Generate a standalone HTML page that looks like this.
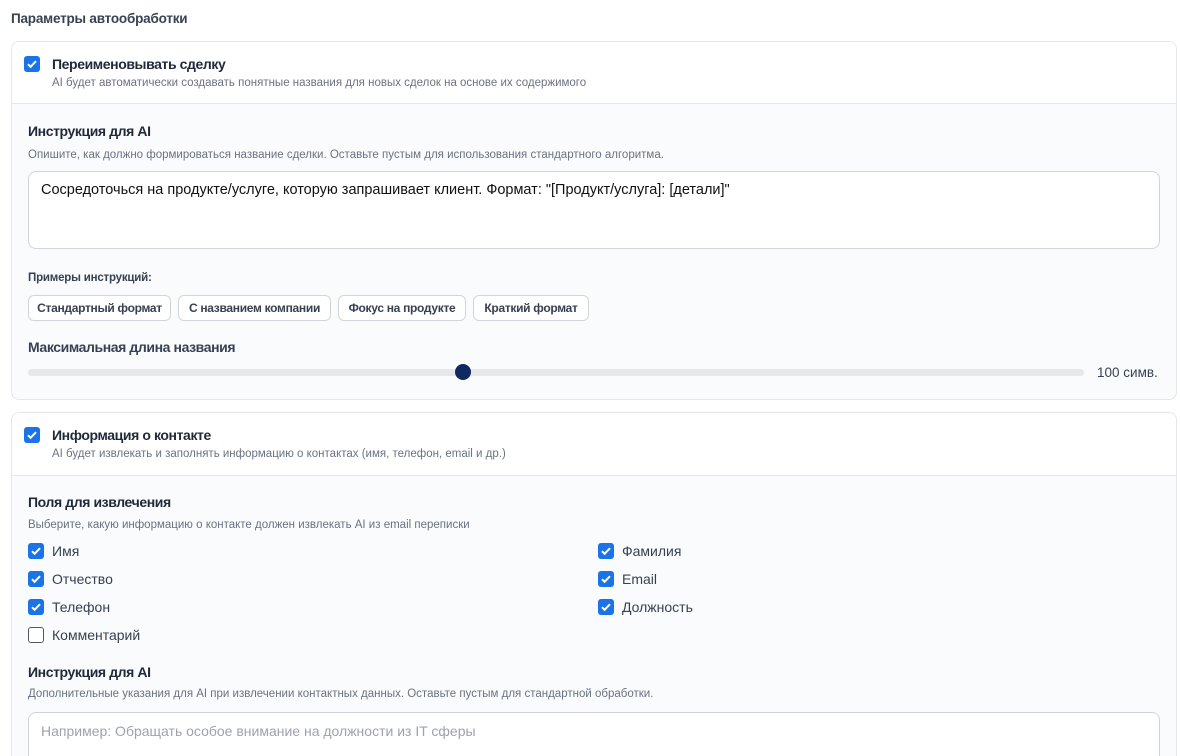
<!DOCTYPE html>
<html><head><meta charset="utf-8"><style>
*{box-sizing:border-box;margin:0;padding:0}
html,body{width:1180px;height:756px;overflow:hidden}
body{background:#fff;font-family:"Liberation Sans",sans-serif;color:#1f2937;position:relative}
.a{position:absolute;white-space:nowrap}
.card{position:absolute;left:11px;width:1166px;border:1px solid #e5e7eb;border-radius:8px;background:#fafbfd;overflow:hidden}
.hd{background:#fff;border-bottom:1px solid #e5e7eb;height:62px;position:relative}
.cb{position:absolute;width:16px;height:16px;border-radius:3px;background:#1a73e8}
.cb svg{position:absolute;left:2px;top:2px}
.cb.off{background:#fff;border:1.5px solid #555}
.t{font-size:14px;font-weight:bold;letter-spacing:-0.4px;color:#1f2937}
.d{font-size:11.5px;color:#6b7280;letter-spacing:0px}
.l{font-size:14px;color:#374151;letter-spacing:0px}
.chip{position:absolute;top:295px;height:26px;border:1px solid #d1d5db;border-radius:6px;background:#fff;font-size:12px;color:#374151;display:flex;align-items:center;justify-content:center;letter-spacing:-0.3px;font-weight:bold}
</style></head><body>
<div class="a" style="left:11px;top:11px;font-size:13.5px;font-weight:bold;color:#374151;letter-spacing:-0.2px">Параметры автообработки</div>

<div class="card" style="top:41px;height:359px">
<div class="hd"></div>
</div>
<div class="cb" style="left:24px;top:56px"><svg width="12" height="12" viewBox="0 0 12 12"><path d="M2 6.2l2.6 2.6L10 3.2" stroke="#fff" stroke-width="2" fill="none"/></svg></div>
<div class="a t" style="left:52px;top:56px">Переименовывать сделку</div>
<div class="a d" style="left:52px;top:77px">AI будет автоматически создавать понятные названия для новых сделок на основе их содержимого</div>
<div class="a t" style="left:28px;top:123px;font-weight:600">Инструкция для AI</div>
<div class="a d" style="left:28px;top:149px">Опишите, как должно формироваться название сделки. Оставьте пустым для использования стандартного алгоритма.</div>
<div class="a" style="left:28px;top:171px;width:1132px;height:78px;border:1px solid #d1d5db;border-radius:8px;background:#fff"></div>
<div class="a l" style="left:41px;top:182px;color:#111;font-size:14.5px">Сосредоточься на продукте/услуге, которую запрашивает клиент. Формат: "[Продукт/услуга]: [детали]"</div>
<div class="a" style="left:28px;top:272px;font-size:11.5px;font-weight:bold;color:#374151;letter-spacing:-0.2px">Примеры инструкций:</div>
<div class="chip" style="left:28px;width:143px">Стандартный формат</div>
<div class="chip" style="left:178px;width:153px">С названием компании</div>
<div class="chip" style="left:338px;width:128px">Фокус на продукте</div>
<div class="chip" style="left:473px;width:116px">Краткий формат</div>
<div class="a t" style="left:28px;top:339px;color:#374151">Максимальная длина названия</div>
<div class="a" style="left:28px;top:369px;width:1056px;height:7px;border-radius:4px;background:#e5e7eb"></div>
<div class="a" style="left:455px;top:364px;width:16px;height:16px;border-radius:50%;background:#0f2a5f"></div>
<div class="a" style="left:1097px;top:365px;font-size:13.5px;color:#374151">100 симв.</div>

<div class="card" style="top:412px;height:400px">
<div class="hd" style="height:63px"></div>
</div>
<div class="cb" style="left:24px;top:427px"><svg width="12" height="12" viewBox="0 0 12 12"><path d="M2 6.2l2.6 2.6L10 3.2" stroke="#fff" stroke-width="2" fill="none"/></svg></div>
<div class="a t" style="left:52px;top:427px">Информация о контакте</div>
<div class="a d" style="left:52px;top:448px">AI будет извлекать и заполнять информацию о контактах (имя, телефон, email и др.)</div>
<div class="a t" style="left:28px;top:494px;font-weight:600">Поля для извлечения</div>
<div class="a d" style="left:28px;top:519px">Выберите, какую информацию о контакте должен извлекать AI из email переписки</div>

<div class="cb" style="left:28px;top:543px"><svg width="12" height="12" viewBox="0 0 12 12"><path d="M2 6.2l2.6 2.6L10 3.2" stroke="#fff" stroke-width="2" fill="none"/></svg></div>
<div class="a l" style="left:52px;top:543px">Имя</div>
<div class="cb" style="left:28px;top:571px"><svg width="12" height="12" viewBox="0 0 12 12"><path d="M2 6.2l2.6 2.6L10 3.2" stroke="#fff" stroke-width="2" fill="none"/></svg></div>
<div class="a l" style="left:52px;top:571px">Отчество</div>
<div class="cb" style="left:28px;top:599px"><svg width="12" height="12" viewBox="0 0 12 12"><path d="M2 6.2l2.6 2.6L10 3.2" stroke="#fff" stroke-width="2" fill="none"/></svg></div>
<div class="a l" style="left:52px;top:599px">Телефон</div>
<div class="cb off" style="left:28px;top:627px"></div>
<div class="a l" style="left:52px;top:627px">Комментарий</div>
<div class="cb" style="left:598px;top:543px"><svg width="12" height="12" viewBox="0 0 12 12"><path d="M2 6.2l2.6 2.6L10 3.2" stroke="#fff" stroke-width="2" fill="none"/></svg></div>
<div class="a l" style="left:622px;top:543px">Фамилия</div>
<div class="cb" style="left:598px;top:571px"><svg width="12" height="12" viewBox="0 0 12 12"><path d="M2 6.2l2.6 2.6L10 3.2" stroke="#fff" stroke-width="2" fill="none"/></svg></div>
<div class="a l" style="left:622px;top:571px">Email</div>
<div class="cb" style="left:598px;top:599px"><svg width="12" height="12" viewBox="0 0 12 12"><path d="M2 6.2l2.6 2.6L10 3.2" stroke="#fff" stroke-width="2" fill="none"/></svg></div>
<div class="a l" style="left:622px;top:599px">Должность</div>

<div class="a t" style="left:28px;top:664px;font-weight:600">Инструкция для AI</div>
<div class="a d" style="left:28px;top:688px">Дополнительные указания для AI при извлечении контактных данных. Оставьте пустым для стандартной обработки.</div>
<div class="a" style="left:28px;top:712px;width:1132px;height:78px;border:1px solid #d1d5db;border-radius:8px;background:#fff"></div>
<div class="a l" style="left:41px;top:723px;color:#9ca3af">Например: Обращать особое внимание на должности из IT сферы</div>
</body></html>
